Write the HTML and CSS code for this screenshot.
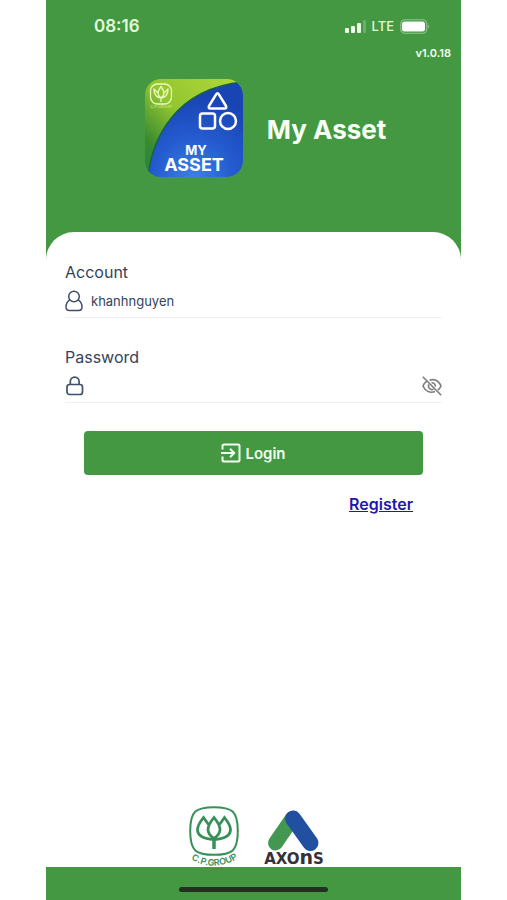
FILE: index.html
```html
<!DOCTYPE html>
<html lang="en">
<head>
<meta charset="utf-8">
<meta name="viewport" content="width=device-width, initial-scale=1">
<title>My Asset</title>
<link rel="stylesheet" href="styles.css">
</head>
<body>
<div class="phone">
  <header class="header">
    <div class="status">
      <span class="time">08:16</span>
      <div class="status-right">
        <svg width="21" height="13" viewBox="0 0 21 13" aria-hidden="true">
          <g fill="#f0fbe9"><rect x="0" y="8" width="4" height="5" rx="1"/><rect x="6" y="6" width="4" height="7" rx="1"/><rect x="12" y="3" width="4" height="10" rx="1"/></g>
          <rect x="18" y="0" width="3" height="13" rx="1" fill="#68af68"/>
        </svg>
        <span class="network">LTE</span>
        <svg width="30" height="15" viewBox="0 0 30 15" aria-hidden="true">
          <rect x=".75" y=".75" width="26" height="13.5" rx="4" fill="none" stroke="#8bc58c" stroke-width="1.2"/>
          <rect x="2" y="2.500" width="23" height="10" rx="2.500" fill="#fff"/>
          <path d="M28 5.500q2 2 0 4z" fill="#8bc58c"/>
        </svg>
      </div>
    </div>
    <p class="version">v1.0.18</p>
    <div class="brand">
      <svg class="app-icon" viewBox="0 0 98 98" role="img" aria-label="My Asset">
        <defs>
          <linearGradient id="lime" x1="1" y1="0" x2="0" y2="1"><stop offset="0" stop-color="#b4d83b"/><stop offset=".5" stop-color="#92c62f"/><stop offset=".8" stop-color="#398b30"/><stop offset="1" stop-color="#288143"/></linearGradient>
          <radialGradient id="blue" cx=".48" cy="1" r=".85"><stop offset="0" stop-color="#3d80e4"/><stop offset=".5" stop-color="#245bcf"/><stop offset="1" stop-color="#1944b4"/></radialGradient>
          <clipPath id="tile"><rect width="98" height="98" rx="16"/></clipPath>
        </defs>
        <g clip-path="url(#tile)">
          <rect width="98" height="98" fill="url(#lime)"/>
          <path d="M3 98C7 62 28 10 98 3V98Z" fill="url(#blue)"/>
          <path d="M3 98C7 62 28 10 98 3" fill="none" stroke="#176247" stroke-width="1.500"/>
        </g>
        <g fill="none" stroke="#fff" stroke-width="2.500" stroke-linejoin="round">
          <path d="M71.300 15.200Q72.500 13.200 73.700 15.200L81 27Q82 29.500 79.500 29.500H65.500Q63 29.500 64 27Z"/>
          <rect x="55" y="34.500" width="15" height="15" rx="2.500"/><circle cx="83" cy="42" r="8"/>
        </g>
        <g fill="none" stroke="#ecf9bd" stroke-width="1.300" stroke-linejoin="round">
          <rect x="5.500" y="5" width="21" height="20" rx="7"/>
          <path d="M16 7.500q-3 4-3 7 0 2 3 4.500 3-2.500 3-4.500 0-3-3-7ZM16 19q-7-1-7-9l4 4M16 19q7-1 7-9l-4 4M16 19v4"/>
        </g>
        <text class="icon-group" x="16" y="29" text-anchor="middle">C.P.GROUP</text>
        <text class="icon-name" text-anchor="middle"><tspan class="icon-my" x="51" y="76">MY</tspan><tspan class="icon-asset" x="49" y="92">ASSET</tspan></text>
      </svg>
      <h1 class="title">My Asset</h1>
    </div>
  </header>

  <main class="sheet">
    <form class="form">
      <div class="field">
        <label for="account">Account</label>
        <div class="row">
          <svg class="field-icon" viewBox="0 0 20 22" fill="none" stroke="#40506a" stroke-width="1.500" aria-hidden="true">
            <circle cx="9" cy="6.500" r="5.300"/><path d="M4.800 9.800C2 11.500 1 14 1 17q0 3.500 3.500 3.500h9Q17 20.500 17 17c0-3-1-5.500-3.800-7.200"/>
          </svg>
          <input id="account" type="text" value="khanhnguyen">
        </div>
      </div>
      <div class="field">
        <label for="password">Password</label>
        <div class="row">
          <svg class="field-icon" viewBox="0 0 20 22" fill="none" stroke="#40506a" stroke-width="1.700" aria-hidden="true">
            <rect x="2" y="9.500" width="15.500" height="10" rx="2.500"/><path d="M5.300 9.500V6.500a4.400 4.400 0 0 1 8.800 0v3"/>
          </svg>
          <input id="password" type="password">
          <button class="reveal" type="button" aria-label="Show password">
            <svg width="20" height="20" viewBox="0 0 20 20" fill="none" stroke="#7d7d7d" stroke-width="1.600" aria-hidden="true">
              <path d="M.8.800 19.200 19.200M7.500 4.200C13 2.500 17 5.500 19 10c-.7 1.700-1.800 3-3.200 4M4.500 5.300C2.800 6.500 1.600 8 1 10c2 5 7 7.500 12 5.500M9.500 6.800a3.400 3.400 0 0 1 3.800 3.800M6.900 8.500a3.400 3.400 0 0 0 4.600 4.600"/>
            </svg>
          </button>
        </div>
      </div>
      <button class="login" type="submit">
        <svg width="20" height="20" viewBox="0 0 20 20" fill="none" stroke="#f2fff0" stroke-width="2" aria-hidden="true">
          <path d="M1.500 6.500V3q0-1.500 1.500-1.500h14q1.500 0 1.500 1.500v14q0 1.500-1.500 1.500H3q-1.500 0-1.500-1.500v-3.500M0 10h12.500M9 5.800l4.200 4.200L9 14.200"/>
        </svg>
        Login
      </button>
      <a class="register" href="#register">Register</a>
    </form>

    <div class="partners">
      <svg width="54" height="61" viewBox="0 0 54 61" role="img" aria-label="C.P. Group">
        <defs><path id="arc" d="M2 52Q27 68 53 51"/></defs>
        <g fill="none" stroke="#379057">
          <path stroke-width="2" d="M27 1.200C45 1.200 50.800 5 50.800 25S45 48.800 27 48.800 3.200 45 3.200 25 9 1.200 27 1.200Z"/>
          <g stroke-width="2.800" stroke-linejoin="miter">
            <path d="M27 11.500c-4 5-6 8.500-6 12 0 3.500 2.500 6.500 6 9 3.500-2.500 6-5.500 6-9 0-3.500-2-7-6-12Z"/>
            <path d="M21.500 18.500 16.500 11.500C13 16 10.500 19.500 10.500 23.500c0 7 8 9.500 16.500 10M32.500 18.500 37.500 11.500C41 16 43.500 19.500 43.500 23.500c0 7-8 9.500-16.500 10"/>
            <path d="M27 32V43" stroke-width="3.500"/>
          </g>
        </g>
        <text class="cp-text"><textPath href="#arc" startOffset="50%" text-anchor="middle">C.P.GROUP</textPath></text>
      </svg>
      <svg width="66" height="61" viewBox="-2 -3 66 61" role="img" aria-label="Axons">
        <path d="M29 10 12.500 34" stroke="#439750" stroke-width="15" stroke-linecap="round"/>
        <path d="M30 9.500 47.500 34" stroke="#2250a0" stroke-width="16" stroke-linecap="round"/>
        <text class="axons-text" x="31" y="55" text-anchor="middle">AXO<tspan class="axons-n">n</tspan>S</text>
      </svg>
    </div>
  </main>
  <footer class="home"><span class="home-bar"></span></footer>
</div>
</body>
</html>
```
FILE: styles.css
```css
* { box-sizing: border-box; }

body {
  margin: 0;
  padding: 0 46px;
  background: #fff;
  font-family: Inter, "Liberation Sans", sans-serif;
  color: #34435c;
}

.phone {
  display: flex;
  flex-direction: column;
  min-height: 100vh;
  background: #449842;
}

.header { color: #f7fff5; }

.status {
  display: flex;
  justify-content: space-between;
  align-items: center;
  padding: 16px 31px 0 48px;
  line-height: 20px;
}

.time { font-size: 17px; font-weight: 600; color: #e2fbd9; }

.status-right { display: flex; align-items: center; gap: 6px; }

.network { font-size: 13px; font-weight: 500; color: #e2fbd9; }

.version {
  margin: 8px 10px 0 0;
  text-align: right;
  font-size: 11px;
  font-weight: 600;
  line-height: 18px;
}

.brand {
  display: flex;
  align-items: center;
  justify-content: center;
  gap: 24px;
  padding: 17px 0 55px 24px;
}

.app-icon { width: 98px; height: 98px; }

.icon-name { font-weight: 700; fill: #fff; }
.icon-my { font-size: 13px; }
.icon-asset { font-size: 18px; }
.icon-group { font-size: 4px; fill: #d3eb93; }

.title { margin: 3px 0 0; font-size: 26px; font-weight: 700; line-height: 32px; }

.sheet {
  display: flex;
  flex-direction: column;
  flex: 1;
  background: #fff;
  border-radius: 28px 28px 0 0;
}

.form {
  display: flex;
  flex-direction: column;
  padding: 28px 19px 0;
}

.field { margin-bottom: 27px; }

.field label { display: block; font-size: 16px; line-height: 24px; }

.row {
  display: flex;
  align-items: center;
  height: 34px;
  border-bottom: 1px solid #eff0f2;
}

.field-icon { width: 20px; height: 22px; }

.row input {
  flex: 1;
  min-width: 0;
  padding: 0 6px;
  border: 0;
  outline: 0;
  background: none;
  font: inherit;
  font-size: 13px;
  color: inherit;
}

.reveal { display: flex; padding: 0; border: 0; background: none; }

.login {
  display: flex;
  align-items: center;
  justify-content: center;
  gap: 4px;
  height: 44px;
  margin: 1px 19px 0;
  border: 0;
  border-radius: 4px;
  background: #449842;
  color: #f2fff0;
  font: inherit;
  font-size: 15px;
  font-weight: 600;
}

.register {
  align-self: flex-end;
  margin: 19px 29px 0 0;
  color: #2317aa;
  font-size: 16px;
  font-weight: 600;
  line-height: 20px;
}

.partners {
  display: flex;
  align-items: flex-start;
  justify-content: center;
  gap: 20px;
  margin-top: auto;
  padding-left: 6px;
}

.partners svg { overflow: visible; }

.cp-text { font-size: 9px; font-weight: 600; fill: #379057; }
.axons-text { font-family: "DejaVu Sans", sans-serif; font-size: 15px; font-weight: 700; fill: #333238; }
.axons-n { font-size: 19px; }

.home {
  display: flex;
  justify-content: center;
  align-items: center;
  height: 33px;
  padding-top: 12px;
}

.home-bar { width: 36%; height: 5px; border-radius: 3px; background: #24301f; }
```
